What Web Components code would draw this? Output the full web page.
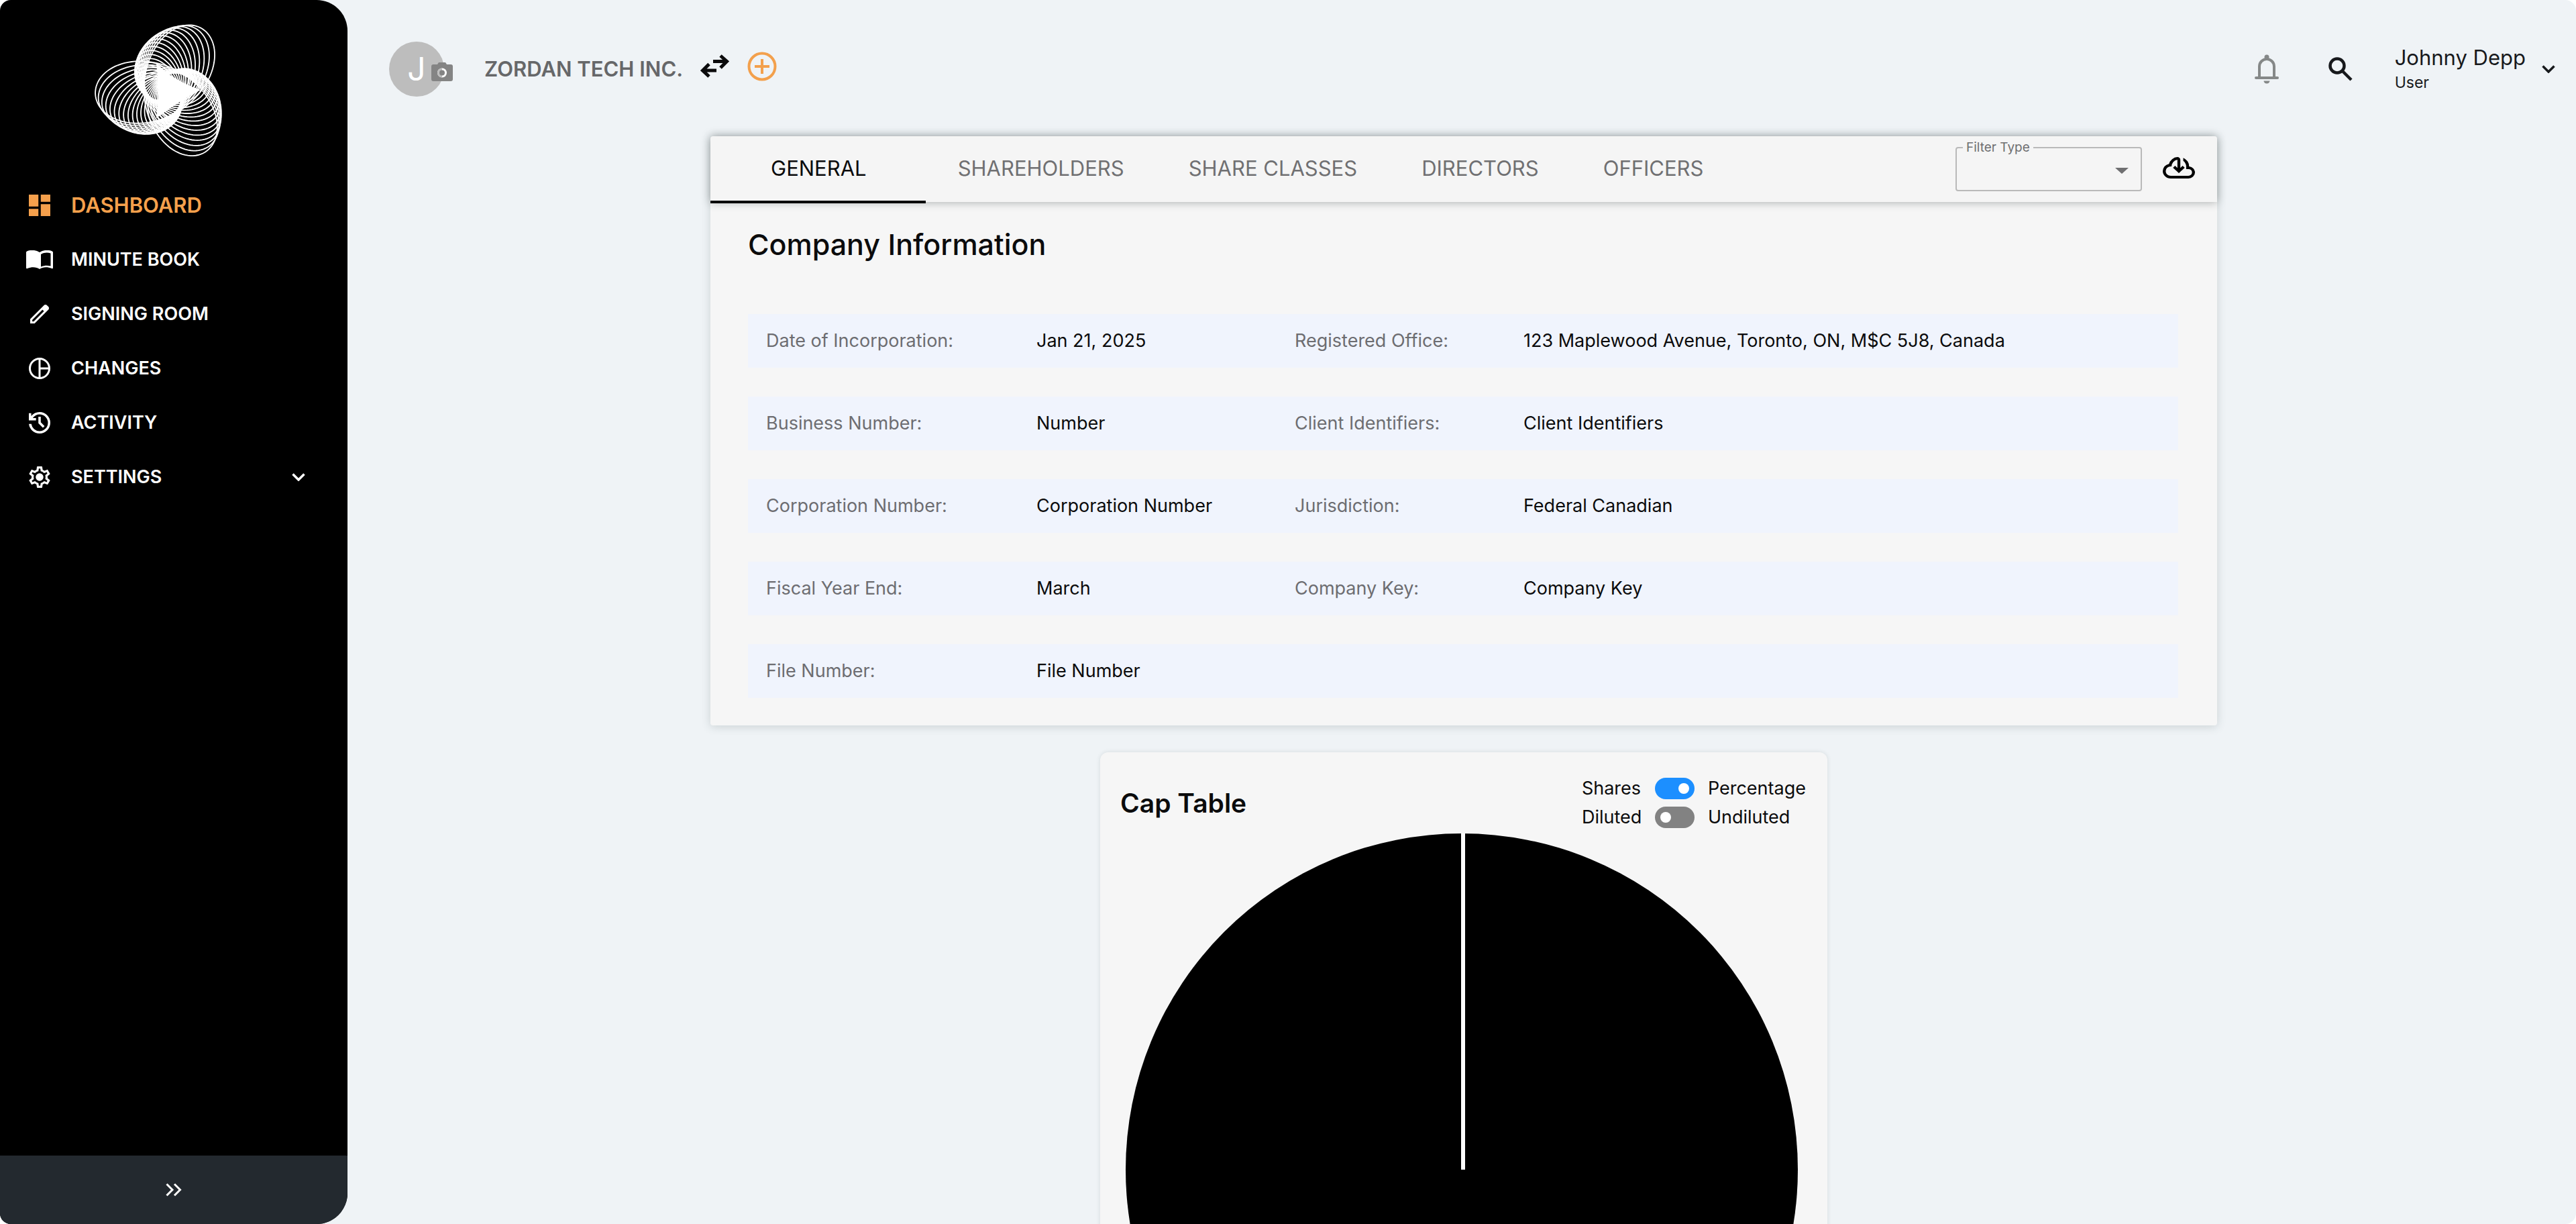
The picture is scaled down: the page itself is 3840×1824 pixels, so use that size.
<!DOCTYPE html>
<html lang="en">
<head>
<meta charset="utf-8">
<title>Dashboard</title>
<style>
  html { background: #fff; }
  body { margin: 0; font-family: Inter, "Liberation Sans", sans-serif; color: #0b0b0c; }
</style>
</head>
<body>
<app-shell>
  <side-nav slot="nav">
    <nav-item icon="dashboard" active>DASHBOARD</nav-item>
    <nav-item icon="book">MINUTE BOOK</nav-item>
    <nav-item icon="pencil">SIGNING ROOM</nav-item>
    <nav-item icon="pie">CHANGES</nav-item>
    <nav-item icon="history">ACTIVITY</nav-item>
    <nav-item icon="gear" expandable>SETTINGS</nav-item>
  </side-nav>
  <top-bar slot="header" company="ZORDAN TECH INC." user="Johnny Depp" role-name="User" initial="J"></top-bar>
  <company-card>
    <tab-button slot="tabs" active>GENERAL</tab-button>
    <tab-button slot="tabs">SHAREHOLDERS</tab-button>
    <tab-button slot="tabs">SHARE CLASSES</tab-button>
    <tab-button slot="tabs">DIRECTORS</tab-button>
    <tab-button slot="tabs">OFFICERS</tab-button>
    <span slot="heading">Company Information</span>
    <info-row k1="Date of Incorporation:" v1="Jan 21, 2025" k2="Registered Office:" v2="123 Maplewood Avenue, Toronto, ON, M$C 5J8, Canada"></info-row>
    <info-row k1="Business Number:" v1="Number" k2="Client Identifiers:" v2="Client Identifiers"></info-row>
    <info-row k1="Corporation Number:" v1="Corporation Number" k2="Jurisdiction:" v2="Federal Canadian"></info-row>
    <info-row k1="Fiscal Year End:" v1="March" k2="Company Key:" v2="Company Key"></info-row>
    <info-row k1="File Number:" v1="File Number"></info-row>
  </company-card>
  <cap-table>
    <span slot="heading">Cap Table</span>
    <toggle-switch slot="toggles" off-label="Shares" on-label="Percentage" on></toggle-switch>
    <toggle-switch slot="toggles" off-label="Diluted" on-label="Undiluted"></toggle-switch>
  </cap-table>
</app-shell>

<script>
const ICONS = {
  dashboard: [32, 32, '3 3 18 18', '<path fill="currentColor" d="M3 13h8V3H3v10zm0 8h8v-6H3v6zm10 0h8V11h-8v10zm0-18v6h8V3h-8z"/>'],
  book: [40, 28, '0 0 40 28', '<path fill="currentColor" fill-rule="evenodd" d="M20 3C14-1 6-1 1 1.500Q0 2 0 3V26Q0 28 2 27C8 24.500 15 24.500 20 28C25 24.500 32 24.500 38 27Q40 28 40 26V3Q40 2 39 1.500C34-1 26-1 20 3ZM22 6C27 3 32 3 36.500 4.500V23.500C32 22.500 27 22.500 22 24.500Z"/>'],
  pencil: [28, 28, '120 -840 720 720', '<path fill="currentColor" d="M200-200h57l391-391-57-57-391 391v57Zm-80 80v-170l528-527q12-11 26.500-17t30.500-6q16 0 31 6t26 18l55 56q12 11 17.500 26t5.500 30q0 16-5.500 30.500T817-647L290-120H120Z"/>'],
  pie: [32, 32, '0 0 32 32', '<g fill="none" stroke="currentColor" stroke-width="3"><circle cx="16" cy="16" r="14.500"/><path d="M16 1v30M16 16h15"/></g>'],
  history: [32, 32, '120 -840 720 720', '<path fill="currentColor" d="M480-120q-138 0-240.500-91.500T122-440h82q14 104 92.500 172T480-200q117 0 198.500-81.500T760-480q0-117-81.500-198.500T480-760q-69 0-129 32t-101 88h110v80H120v-240h80v94q51-64 124.500-99T480-840q75 0 140.500 28.500t114 77q48.500 48.500 77 114T840-480q0 75-28.500 140.500t-77 114q-48.500 48.500-114 77T480-120Zm112-192L440-464v-216h80v184l128 128-56 56Z"/>'],
  gear: [32, 32, '2 2 20 20', '<path fill="currentColor" d="M19.430 12.980c.04-.32.07-.64.07-.98 0-.34-.03-.66-.07-.98l2.110-1.650c.19-.15.24-.42.12-.64l-2-3.460c-.09-.16-.26-.25-.44-.25-.06 0-.12.010-.17.030l-2.490 1c-.52-.4-1.080-.73-1.690-.98l-.38-2.650C14.460 2.180 14.250 2 14 2h-4c-.25 0-.46.18-.49.42l-.38 2.650c-.61.25-1.170.59-1.690.98l-2.490-1c-.06-.02-.12-.03-.18-.03-.17 0-.34.09-.43.25l-2 3.460c-.13.22-.07.49.12.64l2.110 1.650c-.04.32-.07.65-.07.98 0 .33.03.66.07.98l-2.110 1.650c-.19.15-.24.42-.12.64l2 3.460c.09.16.26.25.44.25.06 0 .12-.01.17-.03l2.490-1c.52.4 1.080.73 1.690.98l.38 2.650c.03.24.24.42.49.42h4c.25 0 .46-.18.49-.42l.38-2.650c.61-.25 1.170-.59 1.690-.98l2.490 1c.06.02.12.03.18.03.17 0 .34-.09.43-.25l2-3.460c.12-.22.07-.49-.12-.64l-2.110-1.650zm-1.980-1.710c.04.31.05.52.05.73 0 .21-.02.43-.05.73l-.14 1.130.89.7 1.080.84-.7 1.210-1.270-.51-1.040-.42-.9.68c-.43.32-.84.56-1.250.73l-1.060.43-.16 1.130-.2 1.350h-1.400l-.19-1.350-.16-1.130-1.060-.43c-.43-.18-.83-.41-1.230-.71l-.91-.7-1.060.43-1.270.51-.7-1.210 1.080-.84.89-.7-.14-1.130c-.03-.31-.05-.54-.05-.74s.02-.43.05-.73l.14-1.130-.89-.7-1.080-.84.7-1.210 1.270.51 1.040.42.9-.68c.43-.32.84-.56 1.250-.73l1.060-.43.16-1.130.2-1.350h1.390l.19 1.350.16 1.130 1.060.43c.43.18.83.41 1.230.71l.91.7 1.060-.43 1.270-.51.7 1.210-1.070.85-.89.7.14 1.130z"/><circle cx="12" cy="12" r="3.600" fill="currentColor"/>'],
  chevron: [20, 12, '0 0 20 12', '<path fill="none" stroke="currentColor" stroke-width="3.500" d="M1.500 1.500 10 10 18.500 1.500"/>'],
  double: [24, 20, '0 0 24 20', '<path fill="none" stroke="currentColor" stroke-width="3" d="M1.500 1.500 10 10 1.500 18.500M13 1.500 21.500 10 13 18.500"/>'],
  swap: [43, 35, '0 0 43 35', '<path fill="none" stroke="currentColor" stroke-width="5" d="M19 10.500H39M30 2 39.500 10.500 30 20M24 24H4M13 14.500 3.500 24 13 33"/>'],
  plus: [44, 44, '0 0 44 44', '<g fill="none" stroke="currentColor" stroke-width="4"><circle cx="22" cy="22" r="19.500"/><path d="M22 11V33M11 22H33"/></g>'],
  camera: [32, 28, '0 0 32 28', '<path fill="#848484" d="M3 3H9L11 0H21L23 3H29Q32 3 32 6V25Q32 28 29 28H3Q0 28 0 25V6Q0 3 3 3Z"/><circle cx="16" cy="15.500" r="7" fill="#fff"/><path fill="#bdbdbd" d="M16 8.500A7 7 0 0 0 16 22.500Z"/><circle cx="16" cy="15.500" r="4" fill="#848484"/>'],
  bell: [36, 44, '0 0 36 44', '<g fill="none" stroke="currentColor" stroke-width="4"><path d="M7 34V18a11 11 0 0 1 22 0V34"/><path d="M2 35H34" stroke-linecap="round"/></g><circle cx="18" cy="4" r="3.500" fill="currentColor"/><path fill="currentColor" d="M13.500 39.500H22.500A4.500 4 0 0 1 13.500 39.500Z"/>'],
  search: [36, 36, '0 0 36 36', '<g fill="none" stroke="currentColor" stroke-width="4.500"><circle cx="13" cy="13" r="10.500"/><path d="M20.500 20.500 34 34"/></g>'],
  cloud: [48, 32, '40 -796 880 636', '<path fill="currentColor" d="M260-160q-91 0-155.500-63T40-377q0-78 47-139t123-78q17-72 85-137t145-65q33 0 56.500 23.500T520-716v242l64-62 56 56-160 160-160-160 56-56 64 62v-242q-76 14-118 73.500T280-520h-20q-58 0-99 41t-41 99q0 58 41 99t99 41h480q42 0 71-29t29-71q0-42-29-71t-71-29h-60v-80q0-48-22-89.500T600-680v-93q74 35 117 103.500T760-520q69 8 114.500 59.500T920-340q0 75-52.500 127.500T740-160H260Z"/>'],
  caret: [20, 9, '0 0 20 9', '<path fill="currentColor" d="M0 0H20L10 9Z"/>']
};

function define(name, html) {
  customElements.define(name, class extends HTMLElement {
    constructor() {
      super();
      this.attachShadow({ mode: 'open' });
    }
    connectedCallback() {
      if (this.shadowRoot.childNodes.length) return;
      this.shadowRoot.innerHTML = typeof html === 'function' ? html(this) : html;
    }
  });
}

define('ui-icon', el => {
  const [w, h, box, body] = ICONS[el.getAttribute('name')];
  return `<style>:host{display:inline-flex;flex:none}svg{display:block}</style>
    <svg width="${w}" height="${h}" viewBox="${box}" preserveAspectRatio="none" aria-hidden="true">${body}</svg>`;
});

/* Spirograph mark: one three-lobed curve, repeated while it shrinks and turns,
   over a solid three-pointed core. */
define('brand-logo', () => {
  const copies = 19, steps = 180;
  let paths = '';
  for (let k = 0; k < copies; k++) {
    const f = k / (copies - 1);
    const s = 1 - 0.66 * f;
    const turn = (-62 - 108 * f) * Math.PI / 180;
    let d = '';
    for (let i = 0; i < steps; i++) {
      const t = i / steps * 2 * Math.PI;
      const x = 70 * Math.cos(2 * t) + 36 * Math.cos(t);
      const y = 70 * Math.sin(2 * t) - 36 * Math.sin(t);
      const px = s * (x * Math.cos(turn) - y * Math.sin(turn));
      const py = s * (x * Math.sin(turn) + y * Math.cos(turn));
      d += (i ? 'L' : 'M') + px.toFixed(2) + ' ' + py.toFixed(2);
    }
    paths += `<path d="${d}Z"/>`;
  }
  return `<style>:host{display:block}svg{display:block}</style>
    <svg width="222" height="222" viewBox="-110 -110 220 220" role="img" aria-label="Company logo">
    <g fill="none" stroke="#fff" stroke-width="1.800">${paths}</g>
    <path fill="#fff" d="M-16-42Q8-16 50-2Q18 14-16 40Q-10 0-16-42Z"/></svg>`;
});

define('app-shell', `
  <style>
    :host { display: grid; grid-template-columns: 518px minmax(0, 1fr); grid-template-rows: minmax(0, 1fr); height: 100vh; overflow: hidden;
      background: #eff3f6; border-radius: 16px; }
    main { display: flex; flex-direction: column; align-items: center; gap: 40px; padding-left: 6px; min-width: 0; flex: none; }
    .right { display: flex; flex-direction: column; min-width: 0; overflow: hidden; }
  </style>
  <slot name="nav"></slot>
  <div class="right"><slot name="header"></slot><main><slot></slot></main></div>`);

define('side-nav', `
  <style>
    :host { display: flex; flex-direction: column; background: #000; color: #fff; overflow: hidden;
      border-radius: 0 46px 46px 0; }
    header { height: 265px; box-sizing: border-box; padding: 25px 0 0 138px; }
    nav { flex: 1; display: flex; flex-direction: column; }
    button { height: 102px; border: 0; background: #23292f; color: #fff; display: flex; align-items: center;
      justify-content: center; cursor: pointer; }
  </style>
  <header><brand-logo></brand-logo></header>
  <nav aria-label="Main"><slot></slot></nav>
  <button aria-label="Collapse menu"><ui-icon name="double"></ui-icon></button>`);

define('nav-item', el => `
  <style>
    :host { display: block; font-size: 27px; font-weight: 600; }
    :host([active]) { color: #f5a04c; font-size: 31px; }
    a { display: flex; align-items: center; height: 81px; padding: 0 63px 0 38px; gap: 26px; color: inherit; text-decoration: none; }
    .icon { width: 42px; display: flex; justify-content: center; flex: none; }
    .label { flex: 1; }
  </style>
  <a href="#"><span class="icon"><ui-icon name="${el.getAttribute('icon')}"></ui-icon></span>
    <span class="label"><slot></slot></span>${el.hasAttribute('expandable') ? '<ui-icon name="chevron"></ui-icon>' : ''}</a>`);

define('top-bar', el => `
  <style>
    :host { display: flex; flex: none; align-items: center; height: 203px; padding: 2px 31px 0 62px; box-sizing: border-box; }
    button { border: 0; background: none; padding: 0; font: inherit; color: inherit; display: flex; cursor: pointer; }
    .avatar { position: relative; width: 82px; height: 82px; border-radius: 50%; background: #bdbdbd; color: #fff;
      font-size: 48px; align-items: center; justify-content: center; margin-right: 60px; }
    .avatar ui-icon { position: absolute; left: 63px; top: 31px; }
    h1 { margin: 0 26px 0 0; font-size: 31px; line-height: 38px; font-weight: 600; color: #666769; }
    .tools { display: flex; align-items: center; gap: 27px; padding-bottom: 8px; }
    .tools .add { color: #f3a04c; }
    .right { margin-left: auto; display: flex; align-items: center; color: #17191c; }
    .bell { color: #858888; margin-right: 74px; }
    .search { margin-right: 63px; }
    .user { align-items: center; gap: 24px; text-align: left; }
    .name, .role { display: block; }
    .name { font-size: 31px; line-height: 40px; }
    .role { font-size: 23px; line-height: 34px; }
  </style>
  <button class="avatar" aria-label="Change company picture">${el.getAttribute('initial')}<ui-icon name="camera"></ui-icon></button>
  <h1>${el.getAttribute('company')}</h1>
  <div class="tools">
    <button aria-label="Switch company"><ui-icon name="swap"></ui-icon></button>
    <button class="add" aria-label="Add company"><ui-icon name="plus"></ui-icon></button>
  </div>
  <div class="right">
    <button class="bell" aria-label="Notifications"><ui-icon name="bell"></ui-icon></button>
    <button class="search" aria-label="Search"><ui-icon name="search"></ui-icon></button>
    <button class="user"><span><span class="name">${el.getAttribute('user')}</span><span class="role">${el.getAttribute('role-name')}</span></span>
      <ui-icon name="chevron"></ui-icon></button>
  </div>`);

define('tab-button', el => `
  <style>
    :host { display: block; }
    button { position: relative; height: 98px; padding: 0 48px 4px; border: 0; background: none; font: inherit; font-size: 31px;
      color: #707072; cursor: pointer; white-space: nowrap; }
    :host([active]) button { padding: 0 88px 4px 90px; color: #0b0b0c; }
    :host([active]) button::after { content: ""; position: absolute; left: 0; right: 0; bottom: -2px; height: 4px; background: #000; }
  </style>
  <button role="tab" aria-selected="${el.hasAttribute('active')}"><slot></slot></button>`);

define('filter-select', `
  <style>
    :host { display: block; position: relative; width: 278px; }
    label { position: absolute; left: 11px; top: -11px; padding: 0 5px; background: #f5f5f5; font-size: 19px; line-height: 24px; color: #6f6f71; }
    select { display: block; width: 100%; height: 66px; border: 2px solid #b9b9b9; border-radius: 4px; background: none;
      appearance: none; font: inherit; font-size: 27px; padding: 0 50px 0 16px; color: inherit; }
    ui-icon { position: absolute; right: 20px; top: 31px; color: #6f6f71; pointer-events: none; }
  </style>
  <select id="filter"><option></option></select>
  <label for="filter">Filter Type</label>
  <ui-icon name="caret"></ui-icon>`);

define('company-card', `
  <style>
    :host { display: block; box-sizing: border-box; width: 100%; max-width: 2246px; background: #f6f6f6;
      box-shadow: 0 2px 14px rgba(60, 80, 80, .2); border-radius: 4px; }
    .bar { position: relative; display: flex; align-items: center; height: 98px; background: #f5f5f5; border-radius: 4px 4px 0 0;
      box-shadow: 0 0 14px rgba(40, 50, 50, .4); padding-right: 33px; }
    .tabs { display: flex; flex: 1; }
    .export { border: 0; padding: 0 0 4px; background: none; color: #000; display: flex; margin-left: 31px; cursor: pointer; }
    .body { padding: 38px 58px 41px 56px; }
    h2 { margin: 0 0 79px; font-size: 43px; line-height: 50px; font-weight: 500; }
    .rows { display: flex; flex-direction: column; gap: 43px; }
  </style>
  <div class="bar">
    <div class="tabs" role="tablist"><slot name="tabs"></slot></div>
    <filter-select></filter-select>
    <button class="export" aria-label="Download"><ui-icon name="cloud"></ui-icon></button>
  </div>
  <div class="body">
    <h2><slot name="heading"></slot></h2>
    <div class="rows"><slot></slot></div>
  </div>`);

define('info-row', el => {
  const pair = n => el.hasAttribute('k' + n)
    ? `<dt>${el.getAttribute('k' + n)}</dt><dd>${el.getAttribute('v' + n)}</dd>` : '';
  return `
  <style>
    :host { display: block; }
    dl { display: grid; grid-template-columns: 403px 385px 341px 1fr; align-items: center; height: 80px; margin: 0;
      padding-left: 27px; background: #f0f4fd; font-size: 27px; line-height: 34px; }
    dt { color: #6d6d71; }
    dd { margin: 0; }
  </style>
  <dl>${pair(1)}${pair(2)}</dl>`;
});

define('toggle-switch', el => `
  <style>
    :host { display: block; font-size: 27px; line-height: 43px; }
    label { display: grid; grid-template-columns: 109px 59px auto; align-items: center; cursor: pointer; }
    .on { padding-left: 20px; }
    input { appearance: none; margin: 0; width: 59px; height: 32px; border-radius: 16px; background: #828282;
      display: flex; align-items: center; padding: 0 8px; box-sizing: border-box; cursor: pointer; }
    input::before { content: ""; width: 16px; height: 16px; border-radius: 50%; background: #fff; }
    input:checked { background: #1c8fff; justify-content: flex-end; }
  </style>
  <label><span>${el.getAttribute('off-label')}</span>
    <input type="checkbox" role="switch" ${el.hasAttribute('on') ? 'checked' : ''}>
    <span class="on">${el.getAttribute('on-label')}</span></label>`);

define('cap-table', `
  <style>
    :host { display: block; box-sizing: border-box; width: 100%; max-width: 1084px; padding: 32px 32px 40px 30px; background: #f6f6f6;
      border-radius: 12px; box-shadow: 0 0 6px rgba(60, 80, 80, .14); }
    header { display: flex; align-items: flex-start; justify-content: space-between; }
    h2 { margin: 21px 0 0; font-size: 39px; line-height: 46px; font-weight: 600; }
    svg { display: block; width: 1002px; max-width: 100%; margin: 3px auto 0 8px; }
  </style>
  <header><h2><slot name="heading"></slot></h2><div><slot name="toggles"></slot></div></header>
  <svg viewBox="0 0 1002 1002" role="img" aria-label="Share distribution">
    <circle cx="501" cy="501" r="501" fill="#000"/><path d="M503 0V501" stroke="#fff" stroke-width="6"/>
  </svg>`);
</script>
</body>
</html>
